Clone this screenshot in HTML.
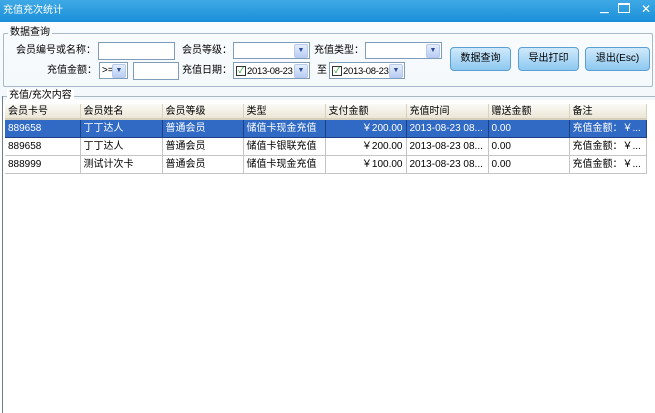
<!DOCTYPE html><html><head><style>
*{margin:0;padding:0;box-sizing:border-box}
body{width:655px;height:413px;overflow:hidden;background:#fff;font:10px "Liberation Sans","Noto Sans CJK SC",sans-serif;position:relative}
.a{position:absolute;white-space:nowrap;line-height:14px}
#tb{left:0;top:0;width:655px;height:22px;background:linear-gradient(#3fa9e6,#1a8fd8);color:#fff;font-size:10px;padding:4px 3px}
#top{left:0;top:22px;width:655px;height:78px;background:linear-gradient(#fafcfe,#f3f8fb)}
.grp{border:1px solid #a9b9c8;border-radius:2px}
.lg{background:#f7fafc;padding:0 2px}
.lb{text-align:right}
.in{background:#fff;border:1px solid #7f9db9;height:18px;line-height:15px;overflow:hidden}
.dd{position:absolute;right:1px;top:1px;width:14px;height:14px;background:linear-gradient(#e4edfb,#b9cdf3);border:1px solid #b7c9ec;border-radius:2px;color:#2d4e9a;font-size:7px;text-align:center;line-height:12px}
.btn{background:linear-gradient(#cfe9fb,#8dc8f0);border:1px solid #5aa0d4;border-radius:4px;text-align:center;line-height:22px;height:24px}
.cb{position:absolute;left:2px;top:3px;width:10px;height:10px;border:1px solid #333;background:#fff;color:#1a9a1a;font-size:8px;line-height:8px;text-align:center}
.dt{position:absolute;left:13px;top:1px;font-size:9.5px;letter-spacing:-0.3px}
table{border-collapse:collapse;position:absolute;left:5px;top:104px;width:641px;table-layout:fixed;font-size:10px}
td{height:18px;line-height:14px;padding:2px 3px 0;white-space:nowrap;overflow:hidden;border-right:1px solid #c5c5c5;border-bottom:1px solid #c5c5c5;vertical-align:middle}
th{height:15px;line-height:13px;font-weight:normal;text-align:left;padding:0 3px;white-space:nowrap;overflow:hidden;background:linear-gradient(#fbfaf6,#ebe6d6);border-right:1px solid #d8d2c0;border-bottom:2px solid #d6cfbb}
tr.s td{background:#316ac5;color:#fff;border-color:#1d3f83}
.r{text-align:right}
</style></head><body>
<div class="a" id="tb">充值充次统计</div>
<div class="a" style="right:42px;top:2px;width:13px;height:10px;color:#fff;font-size:9px">▁</div>
<div class="a" style="right:25px;top:3px;width:12px;height:10px;border:1px solid #fff;border-top-width:2px"></div>
<div class="a" style="right:4px;top:2px;color:#fff;font-size:12px">✕</div>
<div class="a" id="top"></div>
<div class="a grp" style="left:3px;top:33px;width:650px;height:54px"></div>
<div class="a lg" style="left:8px;top:26px">数据查询</div>
<div class="a lb" style="left:0;width:96px;top:44px">会员编号或名称：</div>
<div class="a in" style="left:98px;top:42px;width:77px"></div>
<div class="a lb" style="left:160px;width:72px;top:44px">会员等级：</div>
<div class="a in" style="left:233px;top:42px;width:77px;height:17px"><div class="dd">▼</div></div>
<div class="a lb" style="left:290px;width:74px;top:44px">充值类型：</div>
<div class="a in" style="left:365px;top:42px;width:77px;height:17px"><div class="dd">▼</div></div>
<div class="a lb" style="left:20px;width:77px;top:64px">充值金额：</div>
<div class="a in" style="left:99px;top:62px;width:29px;height:17px;padding-left:2px">&gt;=<div class="dd">▼</div></div>
<div class="a in" style="left:133px;top:62px;width:46px"></div>
<div class="a lb" style="left:160px;width:72px;top:64px">充值日期：</div>
<div class="a in" style="left:233px;top:62px;width:77px;height:17px"><span class="cb">✓</span><span class="dt">2013-08-23</span><div class="dd">▼</div></div>
<div class="a" style="left:317px;top:64px">至</div>
<div class="a in" style="left:329px;top:62px;width:76px;height:17px"><span class="cb">✓</span><span class="dt">2013-08-23</span><div class="dd">▼</div></div>
<div class="a btn" style="left:450px;top:47px;width:61px">数据查询</div>
<div class="a btn" style="left:518px;top:47px;width:61px">导出打印</div>
<div class="a btn" style="left:585px;top:47px;width:65px">退出(Esc)</div>
<div class="a" style="left:3px;top:96px;width:652px;border-top:1px solid #a9b9c8"></div>
<div class="a" style="left:2px;top:96px;height:317px;border-left:1px solid #6a7f93"></div>
<div class="a" style="left:7px;top:89px;background:#fff;padding:0 2px">充值/充次内容</div>
<table>
<colgroup><col style="width:75px"><col style="width:82px"><col style="width:81px"><col style="width:82px"><col style="width:81px"><col style="width:82px"><col style="width:81px"><col style="width:77px"></colgroup>
<tr><th>会员卡号</th><th>会员姓名</th><th>会员等级</th><th>类型</th><th>支付金额</th><th>充值时间</th><th>赠送金额</th><th>备注</th></tr>
<tr class="s"><td>889658</td><td>丁丁达人</td><td>普通会员</td><td>储值卡现金充值</td><td class="r">￥200.00</td><td>2013-08-23 08...</td><td>0.00</td><td>充值金额：￥...</td></tr>
<tr><td>889658</td><td>丁丁达人</td><td>普通会员</td><td>储值卡银联充值</td><td class="r">￥200.00</td><td>2013-08-23 08...</td><td>0.00</td><td>充值金额：￥...</td></tr>
<tr><td>888999</td><td>测试计次卡</td><td>普通会员</td><td>储值卡现金充值</td><td class="r">￥100.00</td><td>2013-08-23 08...</td><td>0.00</td><td>充值金额：￥...</td></tr>
</table>
</body></html>
